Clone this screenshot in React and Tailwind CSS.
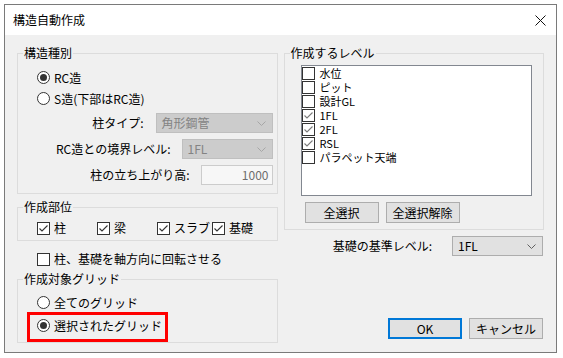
import React from "react";

function Radio({ checked, label }) {
  return (
    <div className="flex h-full items-center">
      <span className="flex h-[13px] w-[13px] shrink-0 items-center justify-center rounded-full border border-[#333333] bg-white">
        {checked ? <span className="h-[7px] w-[7px] rounded-full bg-[#333333]" /> : null}
      </span>
      <span className="ml-[4px] whitespace-nowrap">{label}</span>
    </div>
  );
}

function CheckMark({ color = "#333333" }) {
  return (
    <svg width="11" height="11" viewBox="0 0 11 11" className="block">
      <polyline points="1.5,5.5 4,8 9.5,2.5" fill="none" stroke={color} strokeWidth="1.1" />
    </svg>
  );
}

function Check({ checked, label, className = "" }) {
  return (
    <div className={`flex h-[16px] items-center ${className}`}>
      <span className="flex h-[13px] w-[13px] shrink-0 items-center justify-center border border-[#333333] bg-white">
        {checked ? <CheckMark /> : null}
      </span>
      <span className="ml-[4px] whitespace-nowrap">{label}</span>
    </div>
  );
}

function Chevron({ color }) {
  return (
    <svg width="9" height="5" viewBox="0 0 9 5" className="block">
      <polyline points="0.5,0.5 4.5,4.5 8.5,0.5" fill="none" stroke={color} strokeWidth="1" />
    </svg>
  );
}

function Select({ value, disabled, className = "" }) {
  return (
    <div
      className={`flex h-[20px] items-center justify-between border pl-[5px] pr-[6px] ${
        disabled
          ? "border-[#bfbfbf] bg-[#cccccc] text-[#838383]"
          : "border-[#adadad] bg-[#e1e1e1] text-black"
      } ${className}`}
    >
      <span className="whitespace-nowrap">{value}</span>
      <Chevron color={disabled ? "#a6a6a6" : "#606060"} />
    </div>
  );
}

function Group({ title, className = "", children }) {
  return (
    <fieldset className={`border border-[#dcdcdc] ${className}`}>
      <legend className="ml-[5px] px-[1px] leading-[14px]">{title}</legend>
      {children}
    </fieldset>
  );
}

function Button({ children, primary }) {
  return (
    <button
      className={`flex h-[21px] w-[74px] items-center justify-center bg-[#e1e1e1] ${
        primary ? "border-2 border-[#0078d7]" : "border border-[#adadad]"
      }`}
    >
      {children}
    </button>
  );
}

const levels = [
  { name: "水位", on: false },
  { name: "ピット", on: false },
  { name: "設計GL", on: false },
  { name: "1FL", on: true },
  { name: "2FL", on: true },
  { name: "RSL", on: true },
  { name: "パラペット天端", on: false },
];

export default function App() {
  return (
    <div className="h-[358px] w-[563px] bg-white p-[4px] font-['Noto_Sans_CJK_JP',sans-serif] text-[12px] leading-[16px] text-black">
      <div className="flex h-[349px] w-[553px] flex-col border border-[#7a7a7a] bg-[#f0f0f0]">
        {/* title bar */}
        <div className="flex h-[30px] items-center justify-between bg-white pl-[8px] pr-[10px]">
          <span>構造自動作成</span>
          <svg width="11" height="11" viewBox="0 0 11 11" className="block">
            <path d="M0.5 0.5 L10.5 10.5 M10.5 0.5 L0.5 10.5" stroke="#111" strokeWidth="1" />
          </svg>
        </div>

        <div className="flex px-[12px] pt-[11px]">
          {/* left column */}
          <div className="flex w-[261px] flex-col">
            <Group title="構造種別" className="h-[148px]">
              <div className="pl-[19px] pt-[7px]">
                <div className="h-[21px]">
                  <Radio checked label="RC造" />
                </div>
                <div className="h-[21px]">
                  <Radio label="S造(下部はRC造)" />
                </div>
              </div>
              <div className="flex flex-col items-end pr-[4px]">
                <div className="mt-[4px] flex h-[20px] items-center gap-[12px]">
                  <span>柱タイプ:</span>
                  <Select disabled value="角形鋼管" className="w-[117px]" />
                </div>
                <div className="mt-[6px] flex h-[20px] items-center gap-[11px]">
                  <span>RC造との境界レベル:</span>
                  <Select disabled value="1FL" className="w-[91px]" />
                </div>
                <div className="mt-[6px] flex h-[20px] items-center gap-[11px]">
                  <span>柱の立ち上がり高:</span>
                  <div className="flex h-[20px] w-[72px] items-center justify-end border border-[#cccccc] bg-[#f7f7f7] pr-[3px] text-[#6d6d6d]">
                    1000
                  </div>
                </div>
              </div>
            </Group>

            <Group title="作成部位" className="mt-[6px] h-[41px]">
              <div className="mt-[6px] flex pl-[19px]">
                <Check checked label="柱" className="w-[60px]" />
                <Check checked label="梁" className="w-[60px]" />
                <Check checked label="スラブ" className="w-[55px]" />
                <Check checked label="基礎" />
              </div>
            </Group>

            <Check label="柱、基礎を軸方向に回転させる" className="ml-[20px] mt-[10px]" />

            <Group title="作成対象グリッド" className="mt-[5px] h-[71px]">
              <div className="mt-[5px] pl-[19px]">
                <div className="h-[23px]">
                  <Radio label="全てのグリッド" />
                </div>
                <div className="relative h-[23px]">
                  <Radio checked label="選択されたグリッド" />
                  <div className="absolute left-[-10px] top-[-2px] h-[30px] w-[141px] border-[3px] border-[#ff0000]" />
                </div>
              </div>
            </Group>
          </div>

          {/* right column */}
          <div className="ml-[6px] flex w-[261px] flex-col">
            <Group title="作成するレベル" className="h-[184px]">
              <div className="ml-[16px] mt-[5px] h-[131px] w-[231px] border border-[#828790] bg-white text-[11px]">
                {levels.map((lv) => (
                  <div key={lv.name} className="flex h-[14px] items-center">
                    <span className="flex h-[13px] w-[13px] shrink-0 items-center justify-center border border-[#333333] bg-white">
                      {lv.on ? <CheckMark color="#7a7a7a" /> : null}
                    </span>
                    <span className="ml-[5px] whitespace-nowrap leading-[14px]">{lv.name}</span>
                  </div>
                ))}
              </div>
              <div className="ml-[20px] mt-[6px] flex gap-[7px]">
                <Button>全選択</Button>
                <Button>全選択解除</Button>
              </div>
            </Group>

            <div className="mt-[6px] flex items-center justify-end gap-[20px] pr-[1px]">
              <span>基礎の基準レベル:</span>
              <Select value="1FL" className="w-[91px]" />
            </div>

            <div className="mt-[62px] flex justify-end gap-[7px] pr-[1px]">
              <Button primary>OK</Button>
              <Button>キャンセル</Button>
            </div>
          </div>
        </div>
      </div>
    </div>
  );
}
